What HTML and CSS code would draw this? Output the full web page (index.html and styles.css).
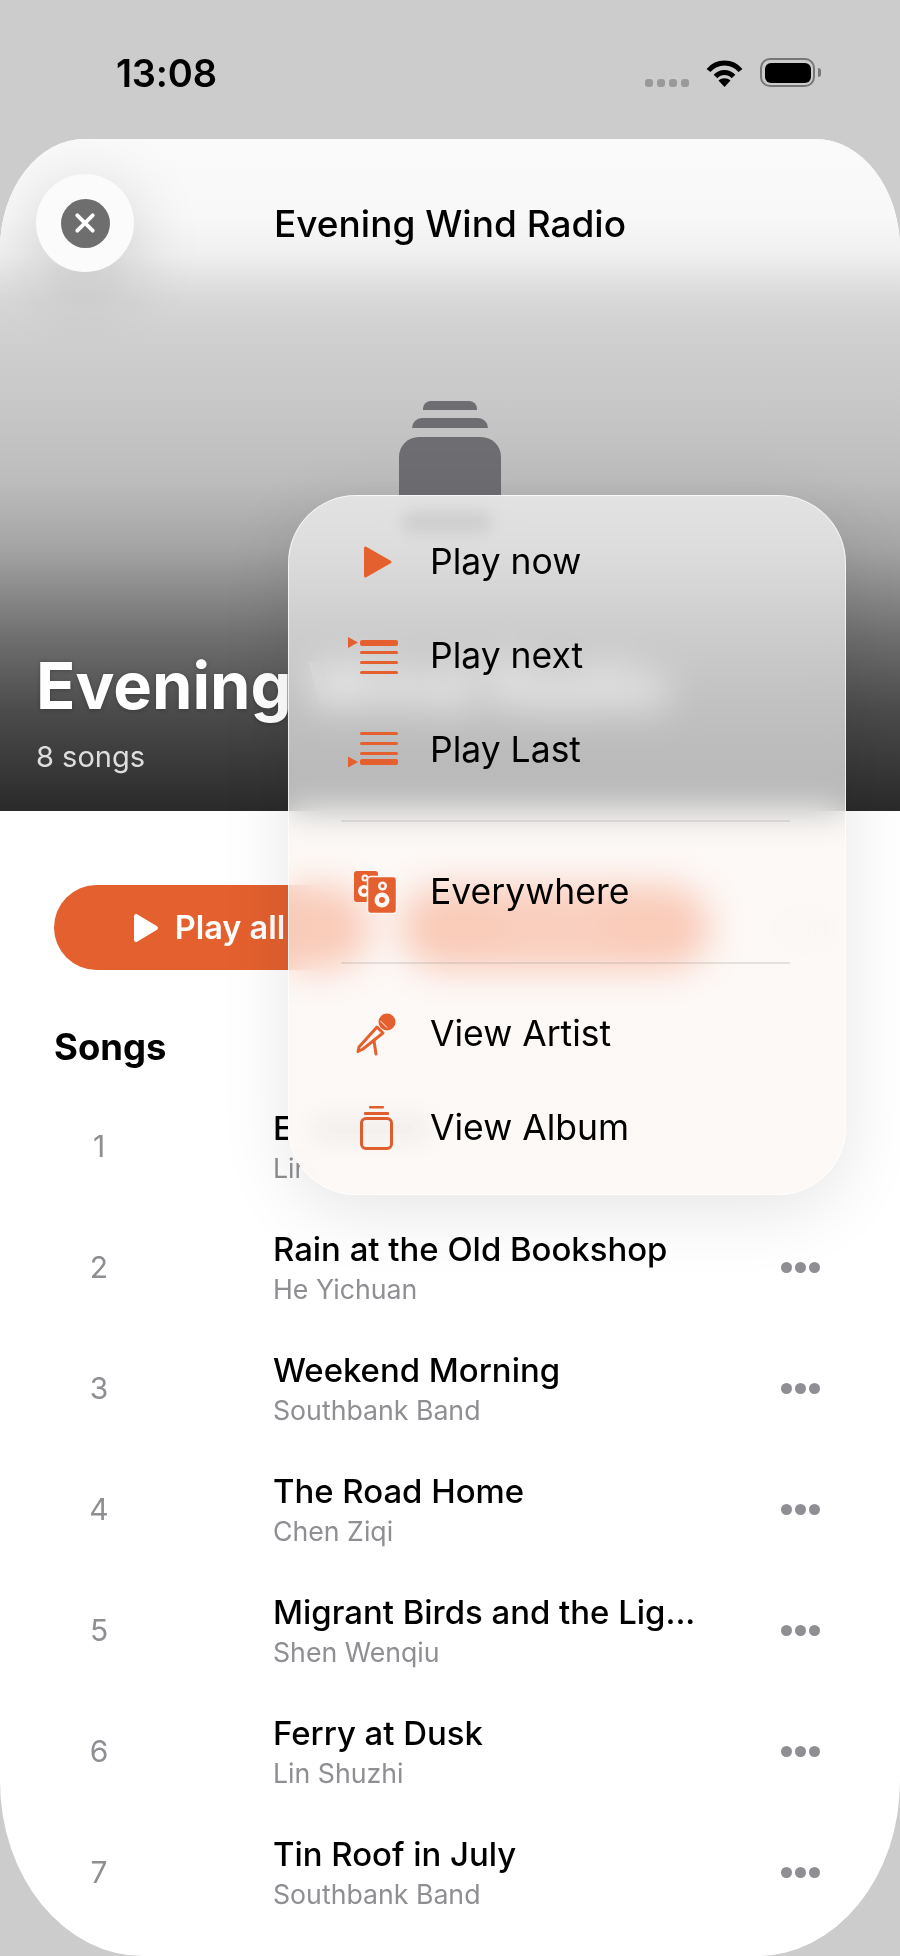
FILE: index.html
```html
<!DOCTYPE html>
<html lang="en">
<head>
    <meta charset="UTF-8">
    <meta name="viewport" content="width=device-width, initial-scale=1.0">
    <title>Evening Wind Radio</title>
    <link rel="stylesheet" href="styles.css">
</head>
<body>
    <div class="screen">
        <div class="status-bar">
            <span class="time">13:08</span>
            <div class="status-icons">
                <div class="signal"><i></i><i></i><i></i><i></i></div>
                <svg class="wifi" viewBox="0 0 37 28" width="37" height="28">
                    <path d="M2.5 11.5C11 1.500 26 1.500 34.500 11.500" fill="none" stroke="#000" stroke-width="5"/>
                    <path d="M9.500 17.500C14.500 12 22.500 12 27.500 17.500" fill="none" stroke="#000" stroke-width="5"/>
                    <path d="M18.500 28L12.500 21.500C16 18.500 21 18.500 24.500 21.500Z" fill="#000"/>
                </svg>
                <div class="battery"><div class="battery-fill"></div></div>
                <div class="battery-nub"></div>
            </div>
        </div>

        <div class="sheet">
            <div class="hero">
                <div class="hero-bar">
                    <button class="close-btn">
                        <span class="close-dot">
                            <svg viewBox="0 0 20 20" width="22" height="22">
                                <path d="M3 3L17 17M17 3L3 17" stroke="#fff" stroke-width="3.500" stroke-linecap="round"/>
                            </svg>
                        </span>
                    </button>
                    <div class="hero-bar-title">Evening Wind Radio</div>
                </div>
                <div class="stack">
                    <div class="stack-a"></div>
                    <div class="stack-b"></div>
                    <div class="stack-c"></div>
                </div>
                <div class="hero-text">
                    <h1>Evening Wind Radio</h1>
                    <p>8 songs</p>
                </div>
            </div>

            <div class="actions">
                <button class="pill pill-first">
                    <svg viewBox="0 0 26 30" width="26" height="30"><path d="M3 3L23 15L3 27Z" fill="#fff" stroke="#fff" stroke-width="4" stroke-linejoin="round"/></svg>
                    Play all
                </button>
                <button class="pill pill-second">Shuffle</button>
                <span class="sort">Sort</span>
            </div>

            <h2 class="songs-title">Songs</h2>

            <div class="song song-covered">
                <span class="song-num">1</span>
                <div class="song-info"><div class="song-name">Evening</div><div class="song-artist">Lin Shuzhi</div></div>
            </div>
            <div class="song">
                <span class="song-num">2</span>
                <div class="song-info"><div class="song-name">Rain at the Old Bookshop</div><div class="song-artist">He Yichuan</div></div>
                <div class="more"><i></i><i></i><i></i></div>
            </div>
            <div class="song">
                <span class="song-num">3</span>
                <div class="song-info"><div class="song-name">Weekend Morning</div><div class="song-artist">Southbank Band</div></div>
                <div class="more"><i></i><i></i><i></i></div>
            </div>
            <div class="song">
                <span class="song-num">4</span>
                <div class="song-info"><div class="song-name">The Road Home</div><div class="song-artist">Chen Ziqi</div></div>
                <div class="more"><i></i><i></i><i></i></div>
            </div>
            <div class="song">
                <span class="song-num">5</span>
                <div class="song-info"><div class="song-name">Migrant Birds and the Lig...</div><div class="song-artist">Shen Wenqiu</div></div>
                <div class="more"><i></i><i></i><i></i></div>
            </div>
            <div class="song">
                <span class="song-num">6</span>
                <div class="song-info"><div class="song-name">Ferry at Dusk</div><div class="song-artist">Lin Shuzhi</div></div>
                <div class="more"><i></i><i></i><i></i></div>
            </div>
            <div class="song">
                <span class="song-num">7</span>
                <div class="song-info"><div class="song-name">Tin Roof in July</div><div class="song-artist">Southbank Band</div></div>
                <div class="more"><i></i><i></i><i></i></div>
            </div>
        </div>

        <!-- Context menu over the sheet -->
        <div class="menu">
            <div class="menu-item">
                <svg class="menu-icon" viewBox="0 0 56 44" width="56" height="44"><path d="M19.500 8L44 22L19.500 36Z" fill="#e4602e" stroke="#e4602e" stroke-width="3" stroke-linejoin="round"/></svg>
                <span>Play now</span>
            </div>
            <div class="menu-item">
                <svg class="menu-icon" viewBox="0 0 56 44" width="56" height="44">
                    <path d="M2 3L12 8.500L2 14Z" fill="#e4602e"/>
                    <rect x="14" y="6" width="38" height="6" rx="2" fill="#e4602e"/>
                    <rect x="14" y="17" width="38" height="3" rx="1.500" fill="#e4602e"/>
                    <rect x="14" y="27" width="38" height="3" rx="1.500" fill="#e4602e"/>
                    <rect x="14" y="37" width="38" height="3" rx="1.500" fill="#e4602e"/>
                </svg>
                <span>Play next</span>
            </div>
            <div class="menu-item">
                <svg class="menu-icon" viewBox="0 0 56 44" width="56" height="44">
                    <rect x="14" y="4" width="38" height="3" rx="1.500" fill="#e4602e"/>
                    <rect x="14" y="14" width="38" height="3" rx="1.500" fill="#e4602e"/>
                    <rect x="14" y="24" width="38" height="3" rx="1.500" fill="#e4602e"/>
                    <rect x="14" y="31" width="38" height="6" rx="2" fill="#e4602e"/>
                    <path d="M2 28.500L12 34L2 39.500Z" fill="#e4602e"/>
                </svg>
                <span>Play Last</span>
            </div>
            <div class="menu-line"></div>
            <div class="menu-item">
                <svg class="menu-icon" viewBox="0 0 56 44" width="56" height="44">
                    <rect x="8" y="1" width="24" height="31" rx="3" fill="#e4602e"/>
                    <circle cx="19" cy="8" r="3.500" fill="#fbf7f5"/><circle cx="19" cy="8" r="1.500" fill="#e4602e"/>
                    <circle cx="18" cy="21" r="6" fill="#fbf7f5"/><circle cx="18" cy="21" r="2.500" fill="#e4602e"/>
                    <rect x="21.500" y="6.500" width="29" height="37" rx="3.500" fill="#e4602e" stroke="#fbf7f5" stroke-width="1.500"/>
                    <circle cx="36.500" cy="16" r="4.500" fill="#fbf7f5"/><circle cx="36.500" cy="16" r="2" fill="#e4602e"/>
                    <circle cx="36" cy="30" r="7.500" fill="#fbf7f5"/><circle cx="36" cy="30" r="3" fill="#e4602e"/>
                </svg>
                <span>Everywhere</span>
            </div>
            <div class="menu-line"></div>
            <div class="menu-item">
                <svg class="menu-icon" viewBox="0 0 56 44" width="56" height="44">
                    <path d="M31 15L37 21L17 37L12 39.500L13 35Z" fill="none" stroke="#e4602e" stroke-width="3" stroke-linejoin="round"/>
                    <path d="M28 29L30 42" stroke="#e4602e" stroke-width="3" stroke-linecap="round"/>
                    <circle cx="41" cy="10" r="8.500" fill="#e4602e"/>
                    <path d="M34.500 9L41 15.500" stroke="#fbf7f5" stroke-width="1"/>
                </svg>
                <span>View Artist</span>
            </div>
            <div class="menu-item">
                <svg class="menu-icon" viewBox="0 0 56 44" width="56" height="44">
                    <rect x="23" y="0" width="15" height="2.500" rx="1" fill="#e4602e"/>
                    <rect x="18" y="6" width="25" height="3" rx="1" fill="#e4602e"/>
                    <rect x="15.500" y="12.500" width="30" height="30" rx="4.500" fill="none" stroke="#e4602e" stroke-width="3"/>
                </svg>
                <span>View Album</span>
            </div>
        </div>
    </div>
</body>
</html>
```

FILE: styles.css
```css
* {
    margin: 0;
    padding: 0;
    box-sizing: border-box;
}

body {
    font-family: 'Inter', 'Liberation Sans', sans-serif;
    background-color: #cccccc;
    overflow: hidden;
}

.screen {
    position: relative;
    width: 900px;
    height: 1956px;
    overflow: hidden;
}

/* Status bar */
.status-bar {
    height: 139px;
    display: flex;
    justify-content: space-between;
    padding: 51px 79px 0 116px;
}

.time {
    font-size: 38px;
    font-weight: 600;
    line-height: 44px;
    color: #000;
    letter-spacing: -0.2px;
}

.status-icons {
    display: flex;
    align-items: flex-start;
    padding-top: 7px;
}

.signal {
    display: flex;
    gap: 4px;
    margin: 21px 17px 0 0;
}

.signal i {
    width: 8px;
    height: 8px;
    border-radius: 3px;
    background: #999;
}

.wifi {
    display: block;
    margin-top: 1px;
    margin-right: 17px;
}

.battery {
    width: 55px;
    height: 29px;
    border: 2.5px solid #777;
    border-radius: 10px;
    padding: 2.5px;
}

.battery-fill {
    height: 100%;
    background: #000;
    border-radius: 6px;
}

.battery-nub {
    width: 3px;
    height: 9px;
    margin: 10px 0 0 3px;
    background: #777;
    border-radius: 0 3px 3px 0;
}

/* Sheet */
.sheet {
    height: 1817px;
    background: #fff;
    overflow: hidden;
    border-radius: 85px 85px 143px 143px / 110px 110px 175px 175px;
}

.hero {
    height: 672px;
    display: flex;
    flex-direction: column;
    background: linear-gradient(to bottom,
        #fafafa 0,
        #f8f8f8 75px,
        #f0f0f0 115px,
        #e2e2e2 140px,
        #d8d8d8 160px,
        #d0d0d0 195px,
        #c8c8c8 260px,
        #bdbdbd 340px,
        #a4a4a4 410px,
        #6e6e6e 500px,
        #4c4c4c 570px,
        #2a2a2a 672px);
}

.hero-bar {
    display: grid;
    grid-template-columns: 98px 1fr 98px;
    align-items: center;
    padding: 35px 36px 0;
}

.close-btn {
    width: 98px;
    height: 98px;
    border: none;
    border-radius: 50%;
    background: #fbfbfb;
    display: flex;
    align-items: center;
    justify-content: center;
    box-shadow: 0 16px 70px rgba(0, 0, 0, 0.18);
}

.close-dot {
    width: 49px;
    height: 49px;
    border-radius: 50%;
    background: #6e6e6e;
    display: flex;
    align-items: center;
    justify-content: center;
}

.hero-bar-title {
    text-align: center;
    font-size: 37px;
    font-weight: 500;
    color: #000;
}

.stack {
    display: flex;
    flex-direction: column;
    align-items: center;
    margin-top: 129px;
}

.stack div {
    background: #6d6d72;
}

.stack-a {
    width: 54px;
    height: 9px;
    border-radius: 8px 8px 0 0;
}

.stack-b {
    width: 76px;
    height: 10px;
    margin-top: 8px;
    border-radius: 10px 10px 0 0;
}

.stack-c {
    width: 102px;
    height: 59px;
    margin-top: 9px;
    border-radius: 20px 20px 0 0;
}

.hero-text {
    margin-top: auto;
    padding: 0 36px 37px;
    color: #fff;
}

.hero-text h1 {
    font-size: 65px;
    font-weight: 700;
    line-height: 76px;
    white-space: nowrap;
    text-shadow: 0 1px 4px rgba(0, 0, 0, 0.25);
}

.hero-text p {
    margin-top: 16px;
    font-size: 29px;
    line-height: 34px;
    color: #dedede;
}

/* Buttons */
.actions {
    display: flex;
    align-items: center;
    margin: 74px 0 0 54px;
}

.pill {
    height: 85px;
    border: none;
    border-radius: 43px;
    background: #e4602e;
    color: #fff;
    font-family: inherit;
    font-size: 32.5px;
    font-weight: 600;
    display: flex;
    align-items: center;
    justify-content: center;
    gap: 16px;
}

.pill-first {
    width: 316px;
    padding-right: 6px;
    margin-right: 30px;
}

.pill-second {
    width: 310px;
    margin-right: 40px;
    color: #f2a98c;
}

.sort {
    margin-left: 30px;
    font-size: 26px;
    color: #c4c4c4;
}

.songs-title {
    margin: 55px 0 16px 54px;
    font-size: 36.5px;
    font-weight: 700;
    line-height: 44px;
    color: #000;
}

/* Song rows */
.song {
    height: 121px;
    padding: 0 80px 0 54px;
    display: flex;
    align-items: center;
}

.song-num {
    width: 88px;
    margin-right: 132px;
    text-align: center;
    font-size: 30px;
    color: #8e8e93;
    transform: translateX(1px);
}

.song-info {
    flex: 1;
    margin-left: -1px;
}

.song-name {
    font-size: 32.9px;
    font-weight: 500;
    line-height: 40px;
    color: #000;
}

.song-artist {
    margin-top: 4px;
    font-size: 26.7px;
    line-height: 32px;
    color: #8e8e93;
}

/* first row sits under the menu, only its start shows */
.song-covered .song-name {
    clip-path: inset(0 532px 0 0);
}

.song-covered .song-artist {
    clip-path: inset(0 517px 0 0);
}

.more {
    display: flex;
    gap: 3px;
    margin-top: 2px;
}

.more i {
    width: 11px;
    height: 11px;
    border-radius: 50%;
    background: #8e8e93;
}

/* Menu */
.menu {
    position: absolute;
    top: 495px;
    left: 288px;
    width: 558px;
    height: 700px;
    padding: 18.5px 0;
    border-radius: 68px;
    border: 1.5px solid rgba(255, 255, 255, 0.75);
    background: linear-gradient(to bottom,
        rgba(248, 248, 248, 0.68) 0,
        rgba(248, 248, 248, 0.68) 300px,
        rgba(251, 246, 243, 0.72) 340px);
    backdrop-filter: blur(18px) saturate(1.15);
    box-shadow: 0 16px 70px rgba(0, 0, 0, 0.1);
}

/* faint ghost of the album icon showing through the glass */
.menu::before {
    content: "";
    position: absolute;
    top: 14px;
    left: 112px;
    width: 92px;
    height: 24px;
    border-radius: 12px;
    background: rgba(0, 0, 0, 0.07);
    filter: blur(7px);
}

/* same for the first song's title */
.menu::after {
    content: "";
    position: absolute;
    top: 618px;
    left: 22px;
    width: 120px;
    height: 30px;
    border-radius: 15px;
    background: rgba(0, 0, 0, 0.035);
    filter: blur(10px);
}

.menu-item {
    height: 94px;
    display: flex;
    align-items: center;
    font-size: 35.5px;
    color: #000;
}

.menu-icon {
    display: block;
    margin: 0 28px 0 57px;
    flex-shrink: 0;
}

.menu-line {
    height: 2px;
    margin: 23px 55px 23px 52px;
    background: rgba(160, 155, 150, 0.25);
}
```
